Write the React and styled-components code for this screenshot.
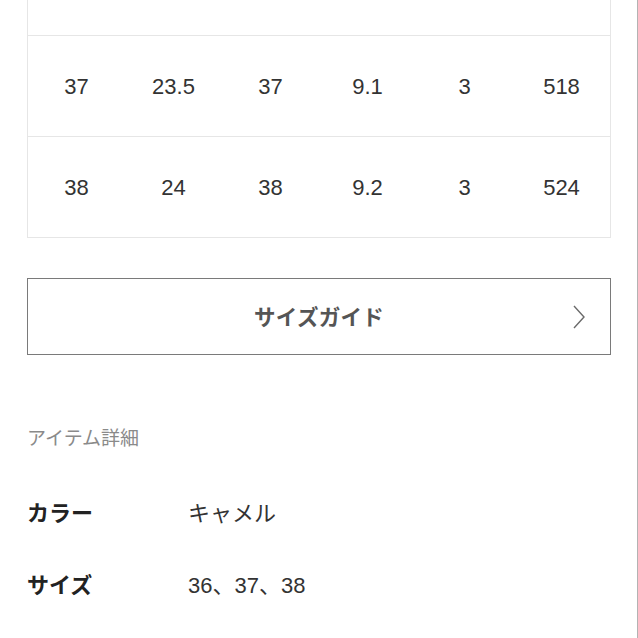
import React from "react";
import styled, { createGlobalStyle } from "styled-components";

const Global = createGlobalStyle`
  html, body { margin: 0; padding: 0; background: #fff; }
  body { font-family: "Liberation Sans", "Noto Sans CJK JP", sans-serif; overflow: hidden; }
`;

const Page = styled.div`
  box-sizing: border-box;
  width: 638px;
  height: 638px;
  overflow: hidden;
  border-right: 1px solid #b3b3b3;
`;

const Inner = styled.div`
  padding: 0 26px 0 27px;
`;

const Table = styled.div`
  border-left: 1px solid #e6e6e6;
  border-right: 1px solid #e6e6e6;
`;

const Row = styled.div`
  display: grid;
  grid-template-columns: repeat(6, 1fr);
  height: ${(p) => p.$h || 100}px;
  border-bottom: 1px solid #e6e6e6;
  align-items: center;
`;

const Cell = styled.div`
  text-align: center;
  font-family: "Liberation Sans", "Noto Sans CJK JP", sans-serif;
  font-size: 22px;
  color: #333;
  padding-top: 1px;
`;

const GuideButton = styled.button`
  box-sizing: border-box;
  width: 100%;
  height: 77px;
  margin-top: 40px;
  background: #fff;
  border: 1.5px solid #7a7a7a;
  display: flex;
  align-items: center;
  justify-content: center;
  position: relative;
  padding: 0 0 3px;
  font-family: "Noto Sans CJK JP", sans-serif;
  font-weight: 700;
  font-size: 21.5px;
  color: #555;
  letter-spacing: 0.3px;
`;

const Chevron = styled.svg`
  position: absolute;
  right: 24px;
  top: 50%;
  transform: translateY(-50%);
`;

const SectionTitle = styled.div`
  margin-top: 68px;
  font-family: "Noto Sans CJK JP", sans-serif;
  font-size: 19px;
  line-height: 28px;
  color: #8a8a8a;
`;

const Details = styled.div`
  margin-top: 44px;
  display: flex;
  flex-direction: column;
  gap: 37px;
`;

const DetailRow = styled.div`
  display: grid;
  grid-template-columns: 161px 1fr;
  align-items: baseline;
  line-height: 32px;
  font-size: 22px;
`;

const Label = styled.div`
  font-family: "Noto Sans CJK JP", sans-serif;
  font-weight: 700;
  color: #222;
`;

const Value = styled.div`
  font-family: "Liberation Sans", "Noto Sans CJK JP", sans-serif;
  color: #333;
`;

const rows = [
  ["37", "23.5", "37", "9.1", "3", "518"],
  ["38", "24", "38", "9.2", "3", "524"],
];

export default function App() {
  return (
    <>
      <Global />
      <Page>
        <Inner>
          <Table>
            <Row $h={35} />
            {rows.map((r, i) => (
              <Row key={i}>
                {r.map((c, j) => (
                  <Cell key={j}>{c}</Cell>
                ))}
              </Row>
            ))}
          </Table>
          <GuideButton>
            サイズガイド
            <Chevron width="14" height="26" viewBox="0 0 14 26">
              <path d="M2 2 L12 13 L2 24" fill="none" stroke="#6a6a6a" strokeWidth="1.4" />
            </Chevron>
          </GuideButton>
          <SectionTitle>アイテム詳細</SectionTitle>
          <Details>
            <DetailRow>
              <Label>カラー</Label>
              <Value>キャメル</Value>
            </DetailRow>
            <DetailRow>
              <Label>サイズ</Label>
              <Value>36、37、38</Value>
            </DetailRow>
          </Details>
        </Inner>
      </Page>
    </>
  );
}
